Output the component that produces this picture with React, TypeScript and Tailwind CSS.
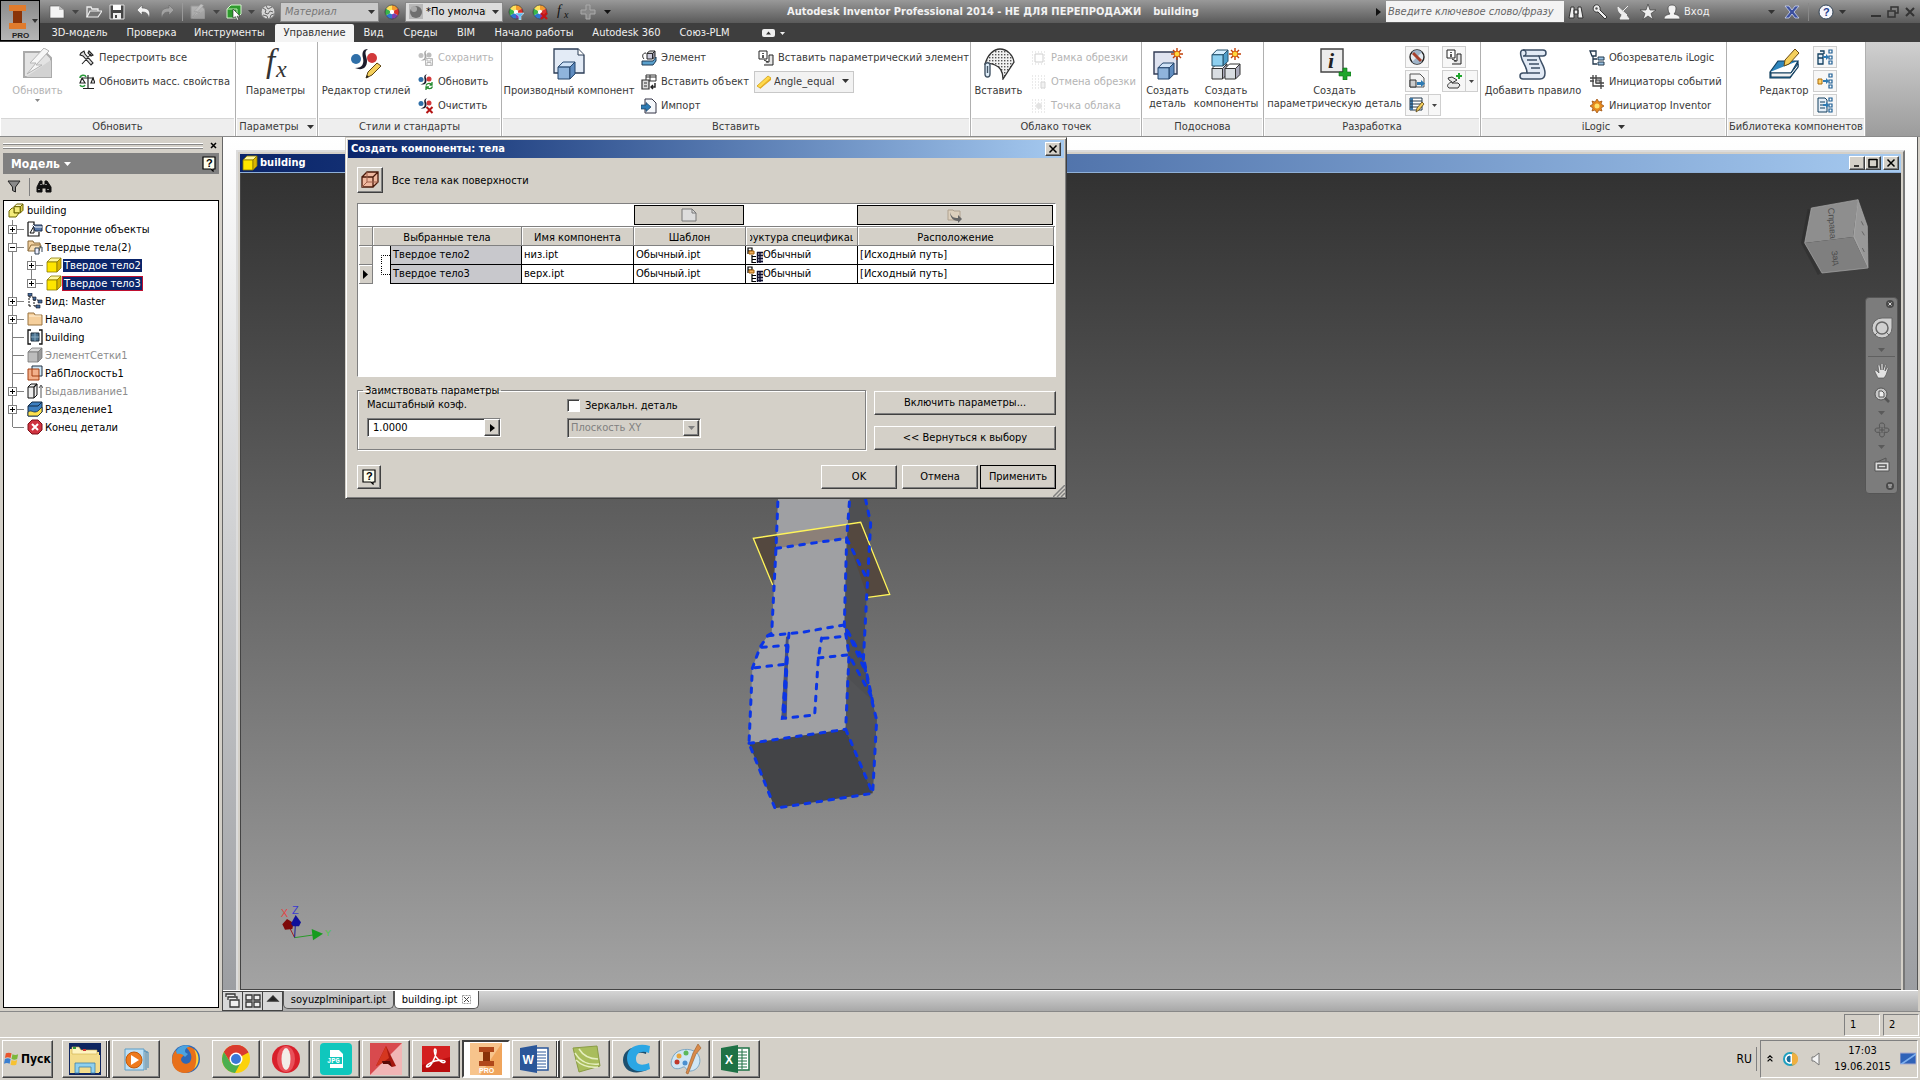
import React from "react";
import type { ReactNode } from "react";

const raised =
  "bg-[#d4d0c8] border border-t-white border-l-white border-r-[#404040] border-b-[#404040] shadow-[inset_-1px_-1px_0_#808080]";
const sunken = "border border-t-[#808080] border-l-[#808080] border-r-white border-b-white";

function Svg({ s = 16, vb = "0 0 16 16", children }: { s?: number; vb?: string; children: ReactNode }) {
  return (
    <svg width={s} height={s} viewBox={vb} fill="none" className="shrink-0" aria-hidden="true">
      {children}
    </svg>
  );
}

function Down({ c = "#333" }: { c?: string }) {
  return (
    <svg width="7" height="4" viewBox="0 0 7 4" className="shrink-0" aria-hidden="true">
      <path d="M0 0h7L3.5 4z" fill={c} />
    </svg>
  );
}

/* ---------- quick access icons ---------- */
const NewIcon = () => (
  <Svg><path d="M1 2h9l5 4v8H1z" fill="#f4f4f4" stroke="#555" strokeWidth=".6" /><path d="M10 2v4h5z" fill="#bbb" /></Svg>
);
const OpenIcon = () => (
  <Svg><path d="M1 13V3h4l1 2h6v2" stroke="#eee" strokeWidth="1.3" /><path d="M4 7h12l-4 6H1z" fill="#777" stroke="#eee" strokeWidth="1.2" /></Svg>
);
const SaveIcon = () => (
  <Svg><path d="M1 1h14v14H1z" fill="#444" stroke="#ddd" /><path d="M4 1h8v5H4z" fill="#fff" /><path d="M4 9h8v6H4z" fill="#eee" /><path d="M6 11h2v3H6z" fill="#444" /></Svg>
);
const UndoIcon = ({ c = "#f2f2f2" }: { c?: string }) => (
  <Svg><path d="M6 1L1 6l5 5V8c4 0 6 1 7 6 2-6 0-10-7-10z" fill={c} stroke="#555" strokeWidth=".5" /></Svg>
);
const RedoIcon = () => (
  <Svg><path d="M10 1l5 5-5 5V8c-4 0-6 1-7 6-2-6 0-10 7-10z" fill="#a2a2a2" stroke="#666" strokeWidth=".5" /></Svg>
);
const BoltPage = ({ s = 16 }: { s?: number }) => (
  <Svg s={s} vb="0 0 32 32">
    <path d="M2 4h21l6 6v19H2z" fill="#e3e3e3" stroke="#aaa" strokeWidth="2" />
    <path d="M22 0L8 15h6L5 26l15-9h-6L27 3z" fill="#f6f6f6" stroke="#b5b5b5" />
    <path d="M4 29L29 12v17z" fill="#d2d2d2" />
  </Svg>
);
const GreenBox = () => (
  <Svg><path d="M1 5l4-4h10v9l-4 4H1z" fill="#2e9a2e" stroke="#d8f5d0" /><path d="M1 5h10v9" stroke="#bfeab5" /><path d="M7 5l7 7-3 .3L13 16l-2 .2-1.500-3.500L7 14z" fill="#fff" stroke="#222" strokeWidth=".6" /></Svg>
);
const Ball = () => (
  <Svg><circle cx="8" cy="8" r="7" fill="#d5d5d5" stroke="#777" /><path d="M3 4l3 2-1 3 3 1 2-3 3 1M6 2l2 3 4-2M3 11l4 1 1 3M10 14l1-3 3-1" stroke="#666" /></Svg>
);
const Wheel = ({ mark }: { mark?: "x" | "f" }) => (
  <Svg>
    <circle cx="8" cy="8" r="7" fill="#eee" />
    <path d="M8 8V1a7 7 0 016.060 3.500z" fill="#f39a2d" />
    <path d="M8 8l6.060-3.500a7 7 0 010 7z" fill="#d9302c" />
    <path d="M8 8l6.060 3.500A7 7 0 018 15z" fill="#7b3fae" />
    <path d="M8 8v7a7 7 0 01-6.060-3.500z" fill="#2f77d0" />
    <path d="M8 8l-6.060 3.500a7 7 0 010-7z" fill="#39b54a" />
    <path d="M8 8L1.940 4.500A7 7 0 018 1z" fill="#ffe25a" />
    <circle cx="8" cy="8" r="2.200" fill="#fff" />
    <circle cx="8" cy="8" r="7" stroke="#333" strokeWidth=".7" />
    {mark === "f" && <path d="M7 9h9l-3 3.500V16h-2v-3.500z" fill="#5ab9f2" stroke="#fff" strokeWidth=".5" />}
    {mark === "x" && <path d="M9 9l6 6M15 9l-6 6" stroke="#c51414" strokeWidth="2.400" />}
  </Svg>
);
const FxSmall = () => (
  <Svg><text x="1" y="11" fontFamily="Liberation Serif" fontStyle="italic" fontSize="14" fill="#111">f</text><text x="8" y="14" fontFamily="Liberation Serif" fontStyle="italic" fontSize="10" fill="#111">x</text></Svg>
);
const PlusGrey = () => (
  <Svg><path d="M6 1h4v5h5v4h-5v5H6v-5H1V6h5z" fill="#888" stroke="#aaa" /></Svg>
);

/* ---------- ribbon icons ---------- */
const Tools = () => (
  <Svg><path d="M3 14L12 4M10 1l4 4-2 1-3-3zM2 3l3-2 1 3 8 9-2 2-8-9-3-1z" fill="#ddd" stroke="#222" strokeWidth="1.100" /></Svg>
);
const Scale = () => (
  <Svg><path d="M9 1v13M4 14.500h11M3 4h12M1 9l2-5 3 5zM12 9l2-5 2 5z" stroke="#222" strokeWidth="1.200" /><path d="M1 4c0-3 5-4 6-1M6 11c-1 2-4 2-5 0" stroke="#2a9a3a" strokeWidth="1.500" /></Svg>
);
const FxBig = () => (
  <svg width="32" height="32" viewBox="0 0 32 32" className="shrink-0 overflow-visible" aria-hidden="true">
    <text x="6" y="24" fontFamily="Liberation Serif" fontStyle="italic" fontSize="33" fill="#333">f</text>
    <text x="16" y="29" fontFamily="Liberation Serif" fontStyle="italic" fontSize="24" fill="#333">x</text>
  </svg>
);
const StyleMark = () => (
  <>
    <circle cx="6" cy="11" r="5" fill="#2f6fa8" />
    <circle cx="22" cy="10" r="5" fill="#d2393b" />
    <path d="M18 1c-6 0-6 5-5 9 1 5 0 10-8 10 7 3 12 0 12-7 0-5-4-9 1-12z" fill="#1c1c2c" />
  </>
);
const StylesBig = () => (
  <Svg s={32} vb="0 0 32 32">
    <StyleMark />
    <path d="M16 30l2-6 9-9 4 3-9 9z" fill="#f4cf5c" stroke="#5b4210" /><path d="M16 30l1-3 2 2z" fill="#222" />
  </Svg>
);
const StyleSmall = ({ k }: { k: "s" | "r" | "x" }) => (
  <Svg vb="0 0 32 32">
    <StyleMark />
    {k === "s" && <path d="M15 17h14v14H15zM18 17v5h8v-5M18 31v-6h8v6" fill="#eee" stroke="#555" strokeWidth="2" />}
    {k === "r" && <path d="M16 23c2-6 10-5 11-2M29 25c-2 6-10 5-12 2M28 16v6h-5M16 32v-6h6" stroke="#258a2f" strokeWidth="2.600" />}
    {k === "x" && <path d="M17 18l12 12M29 18L17 30" stroke="#b41414" strokeWidth="4" />}
  </Svg>
);
const Cube = ({ x, y, w, c1 = "#cfe2f7", c2 = "#8fb4dc", c3 = "#5f8cc0", st = "#23446c" }: { x: number; y: number; w: number; c1?: string; c2?: string; c3?: string; st?: string }) => {
  const d = w * 0.3;
  return (
    <g stroke={st} strokeLinejoin="round">
      <path d={`M${x} ${y + d}l${d} ${-d}h${w - d}l${-d} ${d}z`} fill={c1} />
      <path d={`M${x} ${y + d}h${w - d}v${w - d}h${-(w - d)}z`} fill={c2} />
      <path d={`M${x + w - d} ${y + d}l${d} ${-d}v${w - d}l${-d} ${d}z`} fill={c3} />
    </g>
  );
};
const Sun = ({ x, y, r = 4 }: { x: number; y: number; r?: number }) => (
  <g>
    <path d={`M${x} ${y - r * 1.5}V${y + r * 1.5}M${x - r * 1.5} ${y}H${x + r * 1.5}M${x - r} ${y - r}L${x + r} ${y + r}M${x + r} ${y - r}L${x - r} ${y + r}`} stroke="#c2410c" strokeWidth="1.400" />
    <circle cx={x} cy={y} r={r * 0.7} fill="#ffd83d" stroke="#d9620e" />
  </g>
);
const Derived = () => (
  <Svg s={32} vb="0 0 32 32"><path d="M1 1h24l6 6v18H1z" fill="#e3ebf6" stroke="#2b3c55" strokeWidth="1.300" /><path d="M25 1v6h6" fill="#fff" stroke="#2b3c55" /><Cube x={5} y={14} w={17} /></Svg>
);
const Element = () => (
  <Svg><path d="M1 11h11l3-4v4l-3 4H1z" fill="#5aa0cc" stroke="#1e3b55" /><Cube x={6} y={1} w={8} c1="#eee" c2="#ccd" c3="#99a" st="#222" /><path d="M5 3C1 3 1 7 3 9" stroke="#222" /></Svg>
);
const InsObj = () => (
  <Svg><path d="M5 1h10v6H5zM5 3h10M9 1v6" fill="#fff" stroke="#333" /><path d="M1 6h7v9H1zM3 9h3M3 12h3" fill="#ddd" stroke="#333" strokeWidth="1.200" /><path d="M14 9v4h-4M12 11l-2 2 2 2" stroke="#222" strokeWidth="1.400" /></Svg>
);
const Import = () => (
  <Svg><path d="M4 1h7l4 4v10H4z" fill="#f4f7fb" stroke="#334" /><path d="M0 7h5V4.500L10 9l-5 4.500V11H0z" fill="#2e7bb4" stroke="#173d5e" strokeWidth=".7" /></Svg>
);
const IPart = () => (
  <Svg><path d="M1 1h8v8H1z" fill="#fff" stroke="#222" /><path d="M5 3v1M5 5v3" stroke="#222" strokeWidth="1.500" /><path d="M8 12h3V5h4v10H6" fill="#e6e6e6" stroke="#222" /><path d="M6 10l4 2" stroke="#222" /></Svg>
);
const Ruler = () => (
  <Svg><path d="M1 12L12 2l3 2L4 14z" fill="#ffd84a" stroke="#d0a012" strokeWidth=".8" /><path d="M4 14l11-10v2L4 15z" fill="#e6a91b" /></Svg>
);
const Cloud = () => (
  <Svg s={32} vb="0 0 32 32">
    <defs><pattern id="dots" width="3" height="3" patternUnits="userSpaceOnUse"><rect width="3" height="3" fill="#f2f2f2" /><rect width="1.400" height="1.400" fill="#555" /></pattern></defs>
    <path d="M2 16C5 6 11 1 17 1c7 0 13 6 14 13L20 31c0-8-3-12-8-14-4-2-7-2-10-1z" fill="url(#dots)" stroke="#333" strokeWidth="1.300" />
    <path d="M2 17c0-3 5-3 5 0v9c0 4-5 4-5 0zM4.500 18v7" stroke="#456" strokeWidth="1.400" fill="#dfeefa" />
  </Svg>
);
const DotIcon = ({ k }: { k: number }) => (
  <Svg>
    <path d="M1 2h14M1 5h14M1 8h14M1 11h14M1 14h14" stroke="#999" strokeDasharray="1 2" />
    {k === 0 && <path d="M4 4h8v8H4z" fill="#fff" stroke="#888" />}
    {k === 1 && <path d="M10 8h4v6h-4z" fill="#ddd" stroke="#999" />}
    {k === 2 && <circle cx="8" cy="8" r="3" fill="#bbb" />}
  </Svg>
);
const MakePart = () => (
  <Svg s={32} vb="0 0 32 32"><path d="M2 4h23v22H2z" fill="#dfe3f0" stroke="#333c55" strokeWidth="1.400" /><Cube x={6} y={15} w={16} /><Sun x={25} y={6} /></Svg>
);
const MakeComp = () => (
  <Svg s={32} vb="0 0 32 32"><Cube x={2} y={16} w={15} c1="#fff" c2="#d9dde2" c3="#aab" st="#333" /><Cube x={15} y={16} w={15} c1="#fff" c2="#d9dde2" c3="#aab" st="#333" /><Cube x={2} y={2} w={16} c1="#d6efff" c2="#8ed0f0" c3="#4f9fcb" st="#23506c" /><Sun x={25} y={6} /></Svg>
);
const IBig = () => (
  <Svg s={32} vb="0 0 32 32">
    <path d="M2 1h22v23H2z" fill="#ececec" stroke="#444" strokeWidth="1.400" />
    <text x="9" y="20" fontFamily="Liberation Serif" fontStyle="italic" fontWeight="bold" fontSize="22" fill="#222">i</text>
    <path d="M24 20h4v4h4v4h-4v4h-4v-4h-4v-4h4z" fill="#1fa52c" stroke="#0d6b18" strokeWidth=".6" />
  </Svg>
);
const Scroll = ({ s = 32 }: { s?: number }) => (
  <Svg s={s} vb="0 0 32 32">
    <path d="M6 2h20c4 0 4 6 0 6h-4c1 6 6 10 6 17 0 4-2 6-5 6H6c-4 0-4-6 0-6h4C10 18 5 15 4 8 3 4 4 2 6 2z" fill="#e2eaf5" stroke="#3c4f66" strokeWidth="1.500" />
    <path d="M6 2c4 0 4 6 0 6h16M10 25h13M10 12h10M12 16h10M14 20h9" stroke="#3c4f66" strokeWidth="1.300" />
  </Svg>
);
const TreeIc = () => (
  <Svg><path d="M1 1h6v5H3zM4 6v8h4M4 9h4" stroke="#23384d" strokeWidth="1.300" /><path d="M9 7h6v3H9zM9 12h6v3H9z" fill="#9cc4e4" stroke="#23384d" /></Svg>
);
const Events = () => (
  <Svg><path d="M4 1v11h11M1 4h11v11M7 1v8h8M1 7h4" stroke="#444" strokeWidth="1.300" /><path d="M7 6h4v3H7z" fill="#bbb" stroke="#444" /></Svg>
);
const Trigger = () => (
  <Svg><path d="M8 1l2 3 3-1-1 3 3 2-3 2 1 3-3-1-2 3-2-3-3 1 1-3-3-2 3-2-1-3 3 1z" fill="#e68a1d" stroke="#9a4b0a" strokeWidth=".7" /><circle cx="8" cy="8" r="2.500" fill="#ffe16b" /></Svg>
);
const Book = () => (
  <Svg s={32} vb="0 0 32 32"><path d="M2 24L10 13h20l-7 12H3zM2 24v6h20l8-11v-6" fill="#2f86bd" stroke="#123f5f" strokeWidth="1.200" /><path d="M3 25h20l7-9v3l-8 10H3z" fill="#f2f2f2" stroke="#123f5f" /><path d="M16 18l1-6L27 1l4 4-10 11z" fill="#f4cf5c" stroke="#6b4a10" /></Svg>
);
const NoEntry = () => (
  <Svg><circle cx="8" cy="8" r="7" fill="#e4eaf0" stroke="#222" strokeWidth="1.400" /><path d="M8 8L3 3a7 7 0 0110 0zM8 8l5 5a7 7 0 01-10 0z" fill="#9fb4c9" /><path d="M4 4l8 8" stroke="#a5402c" strokeWidth="3" /></Svg>
);
const Export = () => (
  <Svg><path d="M1 1h10l4 4v9H1z" fill="#f3f3f3" stroke="#555" /><path d="M1 7h6v7H1z" fill="#ccc" stroke="#333" /><path d="M8 9h4V7l4 3.500L12 14v-2H8z" fill="#2e7bb4" /></Svg>
);
const TableEdit = () => (
  <Svg><path d="M1 1h12v12H1z" fill="#fff" stroke="#23384d" /><path d="M1 1h3v12H1z" fill="#3d78a8" /><path d="M1 4h12M1 7h12M1 10h12" stroke="#23384d" /><path d="M7 15l1-4 5-6 2 2-5 6z" fill="#f4cf5c" stroke="#5b4210" strokeWidth=".8" /></Svg>
);
const Feature = () => (
  <Svg><path d="M2 5l4-1 5 3-5 3h6l2 2-2 3H3c-3-2-1-5 3-6L3 7z" fill="#e8e8e8" stroke="#333" /><path d="M13 0v6M10 3h6" stroke="#1fa52c" strokeWidth="2" /></Svg>
);
const Lib = ({ k }: { k: number }) => (
  <Svg>
    {k === 0 && <path d="M1 5h5v10H1zM1 9h5M3 2h4v3" fill="#e4eef8" stroke="#123f5f" strokeWidth="1.300" />}
    {k === 1 && <path d="M1 6h4v5H1z" fill="#ffd36b" stroke="#a96b0a" />}
    {k === 2 && <path d="M1 1h7l2 2v12H1zM3 5h5M3 8h5M3 11h5" fill="#e4eef8" stroke="#123f5f" />}
    <path d="M6 7h3V5l3 3-3 3V9H6z" fill="#2e7bb4" />
    <path d="M12 1h3v3h-3zM12 7h3v3h-3zM12 12h3v3h-3z" fill="#fff" stroke="#1e5e93" strokeWidth="1.200" />
  </Svg>
);

/* ---------- ribbon building blocks ---------- */
function Large({ icon, lines, w, off, drop }: { icon: ReactNode; lines: string[]; w: string; off?: boolean; drop?: boolean }) {
  return (
    <button className={`${w} flex shrink-0 flex-col items-center pt-[2px] ${off ? "text-[#b4b4b4]" : ""}`}>
      {icon}
      <span className="mt-1 flex flex-col whitespace-nowrap text-center leading-[13px]">
        {lines.map((l) => (
          <span key={l}>{l}</span>
        ))}
      </span>
      {drop && <span className="mt-[2px]"><svg width="5" height="3" viewBox="0 0 5 3" aria-hidden="true"><path d="M0 0h5L2.500 3z" fill="#888" /></svg></span>}
    </button>
  );
}

function Small({ icon, label, off }: { icon: ReactNode; label: string; off?: boolean }) {
  return (
    <button className={`flex h-6 items-center gap-1 whitespace-nowrap ${off ? "text-[#b4b4b4]" : ""}`}>
      <span className={off ? "opacity-40 grayscale" : ""}>{icon}</span>
      {label}
    </button>
  );
}

function Mini({ icon, label, drop }: { icon: ReactNode; label: string; drop?: boolean }) {
  return (
    <div className="flex h-[22px]">
      <button aria-label={label} className="flex w-6 items-center justify-center border border-[#cfcfcf] bg-[#f7f7f7]">{icon}</button>
      {drop && (
        <button aria-label={`${label} — меню`} className="flex w-3 items-center justify-center border border-l-0 border-[#cfcfcf] bg-[#f7f7f7]">
          <svg width="5" height="3" viewBox="0 0 5 3" aria-hidden="true"><path d="M0 0h5L2.500 3z" fill="#444" /></svg>
        </button>
      )}
    </div>
  );
}

function Panel({ title, w, drop, children }: { title: string; w: string; drop?: boolean; children: ReactNode }) {
  return (
    <section className={`${w} flex shrink-0 flex-col border-r border-[#b0b0b0] bg-white`}>
      <div className="flex h-[76px] pt-1">{children}</div>
      <h2 className="mx-px flex h-[18px] items-center justify-center gap-2 whitespace-nowrap border-t border-[#d6d6d6] bg-[#eeeeee] pb-[2px] font-normal">
        {title}
        {drop && <Down />}
      </h2>
    </section>
  );
}

function Header() {
  const tabs: [string, string][] = [
    ["3D-модель", "w-[79px]"],
    ["Проверка", "w-[65px]"],
    ["Инструменты", "w-[91px]"],
    ["Управление", "w-[79px]"],
    ["Вид", "w-[39px]"],
    ["Среды", "w-[55px]"],
    ["BIM", "w-[36px]"],
    ["Начало работы", "w-[100px]"],
    ["Autodesk 360", "w-[85px]"],
    ["Союз-PLM", "w-[71px]"],
  ];
  return (
    <header className="flex h-[42px] bg-[#3e3e3e]">
      <button aria-label="Меню приложения" className="flex h-[41px] w-[40px] shrink-0 items-center border border-black bg-linear-to-b from-[#8b8b8b] to-[#b5b5b5]">
        <svg width="38" height="39" viewBox="0 0 38 39" aria-hidden="true">
          <path d="M8 4h17v6h-4v12h4v6H8v-6h4V10H8z" fill="#b5501a" />
          <path d="M8 4h17v6H8zM8 22h17v6H8z" fill="#e07b2c" />
          <path d="M12 10h9v12h-9z" fill="#8a3408" />
          <text x="11" y="37" fontSize="8" fontWeight="bold" fontFamily="Liberation Sans" fill="#222">PRO</text>
          <path d="M31 18h6l-3 4z" fill="#333" />
        </svg>
      </button>
      <div className="flex min-w-0 flex-1 flex-col">
        <div className="flex h-[23px] items-center bg-linear-to-b from-[#999] to-[#5a5a5a]">
          <div className="flex h-full w-[620px] shrink-0 items-center pl-[9px]">
            <div className="flex items-center gap-[7px]">
              <button aria-label="Создать"><NewIcon /></button>
              <Down c="#444" />
              <button aria-label="Открыть"><OpenIcon /></button>
              <button aria-label="Сохранить"><SaveIcon /></button>
              <button aria-label="Отменить" className="ml-1"><UndoIcon /></button>
              <button aria-label="Повторить"><RedoIcon /></button>
              <span className="h-[18px] w-px bg-[#999]" />
              <button aria-label="Обновить" className="opacity-50"><BoltPage /></button>
              <Down c="#444" />
            </div>
            <span className="ml-[6px] flex w-[50px] items-center justify-between"><GreenBox /><Down c="#444" /><Ball /></span>
            <div className="relative ml-[4px] h-[20px] w-[99px]">
              <select aria-label="Материал" className="h-full w-full appearance-none border border-[#888] bg-[#c9c9c9] px-1 text-[11px] italic text-[#777]"><option>Материал</option></select>
              <span className="pointer-events-none absolute right-1 top-2"><Down /></span>
            </div>
            <span className="ml-[5px]"><Wheel /></span>
            <div className="relative ml-[5px] h-[20px] w-[98px]">
              <select aria-label="Внешний вид" className="h-full w-full appearance-none border border-[#888] bg-[#dcdcdc] pl-[20px] pr-4 text-[11px] text-black"><option>*По умолчанию</option></select>
              <span className="pointer-events-none absolute left-1 top-[2px]"><Svg><path d="M0 0h14v15H0z" fill="#b8b8b8" /><circle cx="7" cy="8" r="6" fill="#6f6f6f" /><circle cx="5" cy="5" r="3" fill="#aaa" /></Svg></span>
              <span className="pointer-events-none absolute right-1 top-2"><Down /></span>
            </div>
            <div className="ml-[5px] flex items-center gap-[8px]">
              <button aria-label="Настройка"><Wheel mark="f" /></button>
              <button aria-label="Очистить"><Wheel mark="x" /></button>
              <FxSmall />
              <PlusGrey />
              <Down c="#111" />
            </div>
          </div>
          <h1 className="flex flex-1 gap-3 whitespace-nowrap pl-[127px] text-[11px] font-bold text-[#f2f2f2]">
            <span>Autodesk Inventor Professional 2014 - НЕ ДЛЯ ПЕРЕПРОДАЖИ</span>
            <span>building</span>
          </h1>
          <div className="flex h-full w-[544px] shrink-0 items-center">
            <svg width="5" height="8" viewBox="0 0 5 8" aria-hidden="true"><path d="M0 0v8l5-4z" fill="#111" /></svg>
            <input aria-label="Поиск" placeholder="Введите ключевое слово/фразу" className="ml-[5px] h-[21px] w-[178px] bg-[#f3f3f3] pl-[2px] text-[11px] italic text-[#555] placeholder:text-[#666]" />
            <span className="ml-[4px] flex items-center gap-[8px]">
              <Svg><path d="M1 14l2-11h3v11zM10 14V3h3l2 11zM6 6h4v4H6z" fill="#eee" stroke="#333" /></Svg>
              <Svg><path d="M2 2c3-3 7 0 6 4l7 7-2 2-7-7C2 9 0 5 2 2z" fill="#eee" stroke="#333" /><circle cx="4.500" cy="4.500" r="1.200" fill="#555" /></Svg>
              <Svg><path d="M2 3c0 6 4 9 9 8zM7 7l5-5M4 15h9l-3-4H6z" fill="#eee" stroke="#eee" /></Svg>
              <Svg><path d="M8 0l2 6h6l-5 3.500 2 6L8 12l-5 3.500 2-6L0 6h6z" fill="#eee" stroke="#444" strokeWidth=".7" /></Svg>
              <Svg><path d="M4 4c0-4 8-4 8 0 0 3-1 5-2 6 4 1 6 2 6 5H0c0-3 2-4 6-5-1-1-2-3-2-6z" fill="#f2f2f2" stroke="#444" strokeWidth=".7" /></Svg>
            </span>
            <button className="w-[88px] pl-[4px] text-left text-[#f2f2f2]">Вход</button>
            <Down c="#333" />
            <span className="ml-[9px]"><Svg><path d="M1 2h4l3 4 3-4h4l-5 6 5 6h-4l-3-4-3 4H1l5-6z" fill="#3b4f9e" stroke="#cdd5f2" strokeWidth=".8" /></Svg></span>
            <span className="ml-[8px] h-[18px] w-px bg-[#888]" />
            <button aria-label="Справка" className="ml-[9px]">
              <Svg><circle cx="8" cy="8" r="7" fill="#f5f5fb" stroke="#345" /><text x="5" y="12" fontSize="11" fontWeight="bold" fontFamily="Liberation Sans" fill="#24408e">?</text></Svg>
            </button>
            <span className="ml-[5px]"><Down c="#333" /></span>
            <span className="ml-[24px] flex items-center gap-[5px]">
              <Svg s={12} vb="0 0 12 12"><path d="M1 9h10v2H1z" fill="#333" /></Svg>
              <Svg s={12} vb="0 0 12 12"><path d="M4 4V1h7v6H8M1 5h7v6H1z" stroke="#333" strokeWidth="1.500" /></Svg>
              <Svg s={12} vb="0 0 12 12"><path d="M2 2l8 8M10 2l-8 8" stroke="#333" strokeWidth="2" /></Svg>
            </span>
          </div>
        </div>
        <nav className="flex h-[19px] items-end text-[#f0f0f0]">
          {tabs.map(([t, w]) => (
            <button key={t} className={`${w} h-[18px] whitespace-nowrap text-center ${t === "Управление" ? "rounded-t-[2px] bg-[#f4f4f4] text-[#333]" : ""}`}>{t}</button>
          ))}
          <button aria-label="Свернуть ленту" className="ml-[22px] flex h-[18px] items-center gap-[5px]">
            <svg width="13" height="8" viewBox="0 0 13 8" aria-hidden="true"><rect width="13" height="8" rx="2" fill="#eee" /><path d="M4 5.500h5L6.500 2.500z" fill="#333" /></svg>
            <svg width="5" height="3" viewBox="0 0 5 3" aria-hidden="true"><path d="M0 0h5L2.500 3z" fill="#eee" /></svg>
          </button>
        </nav>
      </div>
    </header>
  );
}

function Ribbon() {
  return (
    <div className="flex border-b border-[#8a8a8a] bg-linear-to-b from-[#d0d0d0] to-[#9c9c9c] text-[#3a3a3a]">
      <Panel title="Обновить" w="w-[236px]">
        <div className="w-[79px]"><Large w="w-[75px]" icon={<BoltPage s={32} />} lines={["Обновить"]} off drop /></div>
        <div><Small icon={<Tools />} label="Перестроить все" /><Small icon={<Scale />} label="Обновить масс. свойства" /></div>
      </Panel>
      <Panel title="Параметры" w="w-[82px]" drop>
        <Large w="w-[79px]" icon={<FxBig />} lines={["Параметры"]} />
      </Panel>
      <Panel title="Стили и стандарты" w="w-[184px]">
        <Large w="w-[96px]" icon={<StylesBig />} lines={["Редактор стилей"]} />
        <div className="pl-1">
          <Small icon={<StyleSmall k="s" />} label="Сохранить" off />
          <Small icon={<StyleSmall k="r" />} label="Обновить" />
          <Small icon={<StyleSmall k="x" />} label="Очистить" />
        </div>
      </Panel>
      <Panel title="Вставить" w="w-[469px]">
        <Large w="w-[134px]" icon={<Derived />} lines={["Производный компонент"]} />
        <div className="w-[118px] pl-[5px]">
          <Small icon={<Element />} label="Элемент" />
          <Small icon={<InsObj />} label="Вставить объект" />
          <Small icon={<Import />} label="Импорт" />
        </div>
        <div className="pl-1">
          <Small icon={<IPart />} label="Вставить параметрический элемент" />
          <div className="relative -ml-1 mt-px h-[22px] w-[100px]">
            <select aria-label="iMate" className="h-full w-full appearance-none border border-[#c8c8c8] bg-[#f2f2f2] pl-[19px] pr-4 text-[11px]"><option>Angle_equal</option></select>
            <span className="pointer-events-none absolute left-[2px] top-[3px]"><Ruler /></span>
            <span className="pointer-events-none absolute right-[5px] top-[8px]"><Down /></span>
          </div>
        </div>
      </Panel>
      <Panel title="Облако точек" w="w-[171px]">
        <Large w="w-[55px]" icon={<Cloud />} lines={["Вставить"]} />
        <div className="pl-[5px]">
          <Small icon={<DotIcon k={0} />} label="Рамка обрезки" off />
          <Small icon={<DotIcon k={1} />} label="Отмена обрезки" off />
          <Small icon={<DotIcon k={2} />} label="Точка облака" off />
        </div>
      </Panel>
      <Panel title="Подоснова" w="w-[122px]">
        <Large w="w-[51px]" icon={<MakePart />} lines={["Создать", "деталь"]} />
        <Large w="w-[66px]" icon={<MakeComp />} lines={["Создать", "компоненты"]} />
      </Panel>
      <Panel title="Разработка" w="w-[217px]">
        <Large w="w-[141px]" icon={<IBig />} lines={["Создать", "параметрическую деталь"]} />
        <div className="flex w-[37px] flex-col gap-[2px]">
          <Mini icon={<NoEntry />} label="Эффективность" />
          <Mini icon={<Export />} label="Экспорт" />
          <Mini icon={<TableEdit />} label="Таблица" drop />
        </div>
        <div className="flex flex-col gap-[2px]">
          <Mini icon={<IPart />} label="Параметрический элемент" />
          <Mini icon={<Feature />} label="Фрагмент" drop />
        </div>
      </Panel>
      <Panel title="iLogic" w="w-[246px]" drop>
        <Large w="w-[104px]" icon={<Scroll />} lines={["Добавить правило"]} />
        <div className="pl-1">
          <Small icon={<TreeIc />} label="Обозреватель iLogic" />
          <Small icon={<Events />} label="Инициаторы событий" />
          <Small icon={<Trigger />} label="Инициатор Inventor" />
        </div>
      </Panel>
      <Panel title="Библиотека компонентов" w="w-[139px]">
        <div className="pl-[28px]"><Large w="w-[58px]" icon={<Book />} lines={["Редактор"]} /></div>
        <div className="flex flex-col gap-[2px]">
          <Mini icon={<Lib k={0} />} label="Опубликовать деталь" />
          <Mini icon={<Lib k={1} />} label="Опубликовать элемент" />
          <Mini icon={<Lib k={2} />} label="Карта категорий" />
        </div>
      </Panel>
      <div className="flex-1" />
    </div>
  );
}

/* ---------- model browser ---------- */
const YCube = ({ g }: { g?: boolean }) => (
  <Svg>
    <path d="M1 5l4-4h10l-4 4z" fill={g ? "#d8d8d8" : "#fff7a0"} stroke={g ? "#777" : "#8a7a00"} strokeWidth=".8" />
    <path d="M1 5h10v10H1z" fill={g ? "#bdbdbd" : "#ffe600"} stroke={g ? "#777" : "#8a7a00"} strokeWidth=".8" />
    <path d="M11 5l4-4v10l-4 4z" fill={g ? "#999" : "#d9b400"} stroke={g ? "#777" : "#8a7a00"} strokeWidth=".8" />
  </Svg>
);
const rootIcon = (
  <Svg><Cube x={6} y={1} w={9} c1="#fffbd0" c2="#f4ec7c" c3="#d8cc50" st="#6b6400" /><path d="M1 8l3-3h2v5h5l-3 4H1z" fill="#f4ec7c" stroke="#6b6400" /></Svg>
);
const thirdIcon = (
  <Svg><path d="M1 1h6v3M1 1v14h11v-4" stroke="#111" strokeWidth="1.200" /><path d="M3 12l4-7v7z" fill="#fff" stroke="#111" /><path d="M6 4h9v6H8z" fill="#5878a8" stroke="#1c2c48" /><path d="M6 4l2 2h7" stroke="#fff" /></Svg>
);
const foldIcon = (
  <Svg><path d="M1 12V2h5l1 2h6v2" fill="#f3d1a0" stroke="#8a6a3a" /><path d="M1 12l3-6h10l-2 6z" fill="#f8ddb4" stroke="#8a6a3a" /><path d="M8 9h4v6H8z" fill="#eef" stroke="#345" /><path d="M12 8h3v5" stroke="#345" /></Svg>
);
const folder = (
  <Svg><path d="M1 14V2h6l1 2h7v10z" fill="#f5cf9c" stroke="#9a7440" /><path d="M2 5h12" stroke="#fff1d8" /></Svg>
);
const viewIcon = (
  <Svg><path d="M2 2v11M2 4h4M7 6v7M7 7h4M2 13h3M7 13h3" stroke="#111" strokeDasharray="2 1" /><path d="M1 0h4v3H1zM6 4h3v3H6zM11 7h4v3h-4zM9 12h4v3H9z" fill="#456b99" stroke="#112" strokeWidth=".6" /></Svg>
);
const brIcon = (
  <Svg><path d="M4 1H1v14h3M12 1h3v14h-3" stroke="#111" strokeWidth="1.300" /><path d="M4 4h8v8H4z" fill="#4a7390" stroke="#1b2c3a" /><path d="M8 4v8M4 8h8" stroke="#86a9c0" /></Svg>
);
const planeIcon = (
  <Svg><path d="M5 1h10v10H5z" fill="#cfe6f5" stroke="#234" /><path d="M1 4h11v11H1z" fill="#f3b08a" stroke="#a33e10" /><path d="M5 4v7h7" stroke="#a33e10" /></Svg>
);
const extrIcon = (
  <Svg><path d="M1 4l3-3h6v11l-3 3H1z" fill="#eee" stroke="#111" /><path d="M1 4h6v11M7 4l3-3" stroke="#111" strokeWidth="1.200" /><path d="M14 15V3M12 5l2-3 2 3" stroke="#555" /></Svg>
);
const splitIcon = (
  <Svg><path d="M1 5l4-4h10v10l-4 4H1z" fill="#3d7fc0" stroke="#122b45" /><path d="M1 5h10l4-4" stroke="#122b45" /><path d="M1 11c4-3 5 2 10-1l4-4v5l-4 4H1z" fill="#ffe14d" stroke="#122b45" strokeWidth=".8" /></Svg>
);
const endIcon = (
  <Svg><path d="M5 1h6l4 4v6l-4 4H5l-4-4V5z" fill="#cf3340" stroke="#7a1018" /><path d="M5 5l6 6M11 5l-6 6" stroke="#fff" strokeWidth="2" /></Svg>
);

interface Node {
  icon: ReactNode;
  label: string;
  exp?: "+" | "-";
  child?: boolean;
  last?: boolean;
  tone?: "dim" | "sel" | "selred";
}

const nodes: Node[] = [
  { icon: thirdIcon, label: "Сторонние объекты", exp: "+" },
  { icon: foldIcon, label: "Твердые тела(2)", exp: "-" },
  { icon: <YCube />, label: "Твердое тело2", exp: "+", child: true, tone: "sel" },
  { icon: <YCube />, label: "Твердое тело3", exp: "+", child: true, last: true, tone: "selred" },
  { icon: viewIcon, label: "Вид: Master", exp: "+" },
  { icon: folder, label: "Начало", exp: "+" },
  { icon: brIcon, label: "building" },
  { icon: <YCube g />, label: "ЭлементСетки1", tone: "dim" },
  { icon: planeIcon, label: "РабПлоскость1" },
  { icon: extrIcon, label: "Выдавливание1", exp: "+", tone: "dim" },
  { icon: splitIcon, label: "Разделение1", exp: "+" },
  { icon: endIcon, label: "Конец детали", last: true },
];

function Branch({ exp, last }: { exp?: "+" | "-"; last?: boolean }) {
  return (
    <svg width="19" height="18" viewBox="0 0 19 18" className="shrink-0" aria-hidden="true" shapeRendering="crispEdges">
      <path d={`M4.500 0V${last ? 9 : 18}M4.500 9.500H16`} stroke="#808080" />
      {exp && <path d="M.5 5.500h8v8h-8z" fill="#fff" stroke="#808080" />}
      {exp && <path d="M2 9.500h5" stroke="#000" />}
      {exp === "+" && <path d="M4.500 7v5" stroke="#000" />}
    </svg>
  );
}

const HelpGlyph = () => (
  <Svg><path d="M2 1h12v12h-2v2l-2-2H2z" fill="#fffff0" stroke="#000" strokeWidth="1.200" /><text x="5" y="11" fontSize="11" fontWeight="bold" fontFamily="Liberation Sans" fill="#000">?</text></Svg>
);

function Browser() {
  return (
    <aside className="flex w-[222px] shrink-0 flex-col px-[3px] pb-[3px]">
      <div className="flex h-4 items-center gap-[7px] pt-px">
        <span className="flex h-[6px] flex-1 flex-col justify-between"><span className="h-[2px] border-b border-[#888] bg-white" /><span className="h-[2px] border-b border-[#888] bg-white" /></span>
        <button aria-label="Закрыть панель" className="mr-[2px]"><Svg s={7} vb="0 0 7 7"><path d="M1 1l5 5M6 1L1 6" stroke="#000" strokeWidth="1.500" /></Svg></button>
      </div>
      <div className="flex h-[21px] items-center bg-[#808080] pl-2 pr-[2px] text-[12px] font-bold text-white">
        Модель
        <span className="ml-1 flex-1"><Down c="#fff" /></span>
        <button aria-label="Справка"><HelpGlyph /></button>
      </div>
      <div className="flex h-[26px] items-center gap-[6px] pl-1 text-black">
        <button aria-label="Фильтр"><Svg><path d="M1 2h12L8.500 8v5l-3-1.500V8z" fill="#8a8a8a" stroke="#222" /></Svg></button>
        <span className="h-[18px] w-px bg-[#808080]" />
        <button aria-label="Найти"><Svg><path d="M1 13V8l3-6h2v4h3V2h2l4 6v5h-5v-4H6v4z" fill="#111" stroke="#111" /><path d="M3 10v1M12 10v1M5 5v1M10 5v1" stroke="#fff" /></Svg></button>
      </div>
      <ul className="flex-1 border border-black bg-white pl-[4px] pt-px text-black">
        <li className="flex h-[18px] items-center gap-[3px]">{rootIcon}building</li>
        {nodes.map((n) => (
          <li key={n.label + (n.exp ?? "")} className="flex h-[18px] items-center">
            {n.child && (
              <svg width="19" height="18" viewBox="0 0 19 18" className="shrink-0" aria-hidden="true" shapeRendering="crispEdges"><path d="M4.500 0V18" stroke="#808080" /></svg>
            )}
            <Branch exp={n.exp} last={n.last} />
            <span className="flex items-center gap-px">
              {n.icon}
              <span
                className={`whitespace-nowrap px-px leading-[13px] ${n.tone === "dim" ? "text-[#8c8c8c]" : ""} ${n.tone === "sel" ? "bg-[#0a246a] text-white" : ""} ${n.tone === "selred" ? "bg-[#0a246a] text-white outline outline-[#c01030]" : ""}`}
              >
                {n.label}
              </span>
            </span>
          </li>
        ))}
      </ul>
    </aside>
  );
}

/* ---------- 3D viewport ---------- */
function Tower() {
  return (
    <svg width="220" height="340" viewBox="0 0 660 1020" fill="none" className="absolute left-[459px] top-[317px]" aria-hidden="true">
      <path d="M450 0l45 10 17 90-12 220-10 190 25 120 15 60-12 220-81-192 8-223-14-90 8-260z" fill="#4e4f52" />
      <path d="M235 0h216l-11 145-7 260 10 90-6 223-290 42 10-225 23-63 23-35 12-7 13-255z" fill="#9fa0a3" />
      <path d="M147 760l290-42 81 192-293 45z" fill="#434447" />
      <path d="M440 560l75 70 15 60-12 220-81-192z" fill="#525356" />
      <path d="M160 145l73-11-5 41-10 110z" fill="#54483f" />
      <path d="M233 134l212-33-5 44-212 30z" fill="#8c8078" />
      <path d="M445 101l37-4 87 216-66 9-60-175z" fill="#54483f" />
      <path d="M218 285L160 145 482 97l87 216-66 9" stroke="#fff45a" strokeWidth="4" />
      <path d="M258 440l-14 245 16 4 6-250z" fill="#4c5272" />
      <g stroke="#0b35e6" strokeWidth="9" strokeDasharray="14 22" strokeLinecap="round">
        <path d="M235 0l-7 175-13 255-12 7-23 35v0l-23 63-10 225 78 195 293-45 12-220-15-60-25-120 10-190 12-220-17-80" />
        <path d="M451 0l-11 145-7 260 14 90-10 223 81 192" />
        <path d="M228 175l212-30 60 120" />
        <path d="M205 437l100-10 128-22 60 110 25 120" />
        <path d="M185 472l75-6M165 533l90-10M370 445l63-6M355 504l92-10" />
        <path d="M267 430l-8 90-12 165 97-10 11-171 10-60" />
        <path d="M262 470l-10 210" strokeWidth="12" />
        <path d="M147 760l290-42" />
        <path d="M440 420l50 110M455 510l60 110" />
      </g>
    </svg>
  );
}

function ViewCube() {
  return (
    <svg width="76" height="84" viewBox="0 0 228 252" className="absolute right-[27px] top-[25px]" aria-hidden="true">
      <path d="M34 34l-20 100 50 95" stroke="#222" strokeWidth="10" opacity=".35" fill="none" />
      <path d="M40 30L180 5l-15 112L20 135z" fill="#8e8e8e" />
      <path d="M20 135l145-18 45 93-138 15z" fill="#7f7f7f" />
      <path d="M180 5l28 80 2 125-45-93z" fill="#989898" />
      <path d="M40 30L180 5l28 80 2 125-138 15-52-90zM180 5l-12 110 42 93" stroke="#aaa" strokeWidth="2" fill="none" />
      <text x="90" y="30" transform="rotate(86 90 30)" fontSize="27" fontFamily="Liberation Sans" fill="#4c4c4c">Справа</text>
      <text x="100" y="160" transform="rotate(78 100 160)" fontSize="25" fontFamily="Liberation Sans" fill="#4a4a4a">Зад</text>
      <path d="M190 70l6 12M192 100l7 12M193 150l6 12" stroke="#666" strokeWidth="3" />
    </svg>
  );
}

function NavBar() {
  return (
    <div className="absolute right-[3px] top-[124px] flex h-[197px] w-[33px] flex-col items-center rounded-[4px] border border-[#555] bg-[#7c7c7c] text-[#ddd]">
      <button aria-label="Закрыть навигацию" className="self-end pr-[3px] pt-[2px]"><Svg s={8} vb="0 0 8 8"><circle cx="4" cy="4" r="4" fill="#4a4a4a" /><path d="M2.500 2.500l3 3M5.500 2.500l-3 3" stroke="#ddd" /></Svg></button>
      <button aria-label="Суперштурвал" className="mt-2"><Svg s={24} vb="0 0 24 24"><path d="M12 2h10v10a10 10 0 11-10-10z" fill="#d0d0d0" stroke="#666" /><circle cx="12" cy="12" r="6" stroke="#666" strokeWidth="1.500" /><path d="M5 19l3-3M19 19l-3-3" stroke="#666" /></Svg></button>
      <span className="mt-2"><Down c="#5a5a5a" /></span>
      <span className="mt-1 h-px w-[27px] bg-[#606060]" />
      <button aria-label="Панорамирование" className="mt-[6px]"><Svg><path d="M4 15L1 9c-1-2 1-2 2-1l2 2L4 3c0-2 2-1 2 0l1 4V1c0-1 2-1 2 0v6l2-5c0-1 2-1 1 1l-1 5 2-3c1-1 2 0 1 1l-2 6-2 3z" fill="#e2e2e2" stroke="#555" strokeWidth=".7" /></Svg></button>
      <button aria-label="Зумирование" className="mt-2"><Svg><circle cx="7" cy="7" r="6" fill="#c8c8c8" stroke="#555" /><path d="M5 4h3l2 2v4H5z" fill="#eee" stroke="#555" /><path d="M11 11l4 4" stroke="#555" strokeWidth="2.500" /></Svg></button>
      <span className="mt-2"><Down c="#5a5a5a" /></span>
      <button aria-label="Орбита" className="mt-[7px]"><Svg><path d="M8 1c3 0 3 3 2 5 3 0 5 0 5 2s-2 3-5 2c1 3 0 5-2 5s-3-2-2-5c-3 1-5 0-5-2s2-2 5-2C5 3 5 1 8 1z" stroke="#555" /><path d="M8 5v6M5 8h6" stroke="#555" /></Svg></button>
      <span className="mt-[7px]"><Down c="#5a5a5a" /></span>
      <button aria-label="Вид на" className="mt-2"><Svg><path d="M1 5h14v9H1z" fill="#ddd" stroke="#555" /><path d="M4 8h8v3H4z" stroke="#555" strokeWidth="1.500" /><path d="M3 5l9-4v3" stroke="#555" /></Svg></button>
      <span className="mt-auto self-end pb-[3px] pr-[3px]"><Svg s={8} vb="0 0 8 8"><circle cx="4" cy="4" r="4" fill="#4a4a4a" /><path d="M2 3h4M2.500 5h3" stroke="#ddd" /></Svg></span>
    </div>
  );
}

function WinBtn({ label, d }: { label: string; d: string }) {
  return (
    <button aria-label={label} className={`flex h-[14px] w-4 items-center justify-center ${raised}`}>
      <Svg s={10} vb="0 0 10 10"><path d={d} stroke="#000" strokeWidth="1.500" /></Svg>
    </button>
  );
}

function Workspace() {
  return (
    <main className="flex min-w-0 flex-1 flex-col border-l border-[#666]">
      <div className="flex flex-1 flex-col border-r border-[#555] bg-linear-to-b from-white to-[#9c9ea2] pl-[13px] pr-[12px] pt-[13px]">
        <section className="flex flex-1 flex-col border-2 border-b-0 border-[#dcdcdc] border-r-[#777] bg-[#d4d0c8] px-[2px] pt-[2px]">
          <div className="flex h-[19px] items-center border-b border-[#8fb0d8] bg-linear-to-r from-[#0a246a] to-[#a6caf0] px-[2px] text-white">
            <YCube />
            <h2 className="ml-[2px] flex-1 font-bold">building</h2>
            <WinBtn label="Свернуть" d="M2 8h5" />
            <WinBtn label="Развернуть" d="M1 1.500h8M1 1v8h8V1" />
            <span className="w-[2px]" />
            <WinBtn label="Закрыть" d="M1.500 1.500l7 7M8.500 1.500l-7 7" />
          </div>
          <div className="relative flex-1 overflow-hidden border-b border-l border-[#444] bg-linear-to-b from-[#323232] to-[#a3a3a3]">
            <Tower />
            <ViewCube />
            <NavBar />
            <svg width="60" height="40" viewBox="0 0 180 120" className="absolute bottom-[44px] left-[38px]" aria-hidden="true">
              <path d="M47 98L28 60" stroke="#a02020" strokeWidth="3" /><path d="M10 58l14-16 20 12-4 18-22 2z" fill="#7d0a0a" />
              <path d="M47 98l2-40" stroke="#1a1a90" strokeWidth="3" /><path d="M36 56l14-26 16 22-6 12H42z" fill="#10109a" />
              <path d="M47 98l55-8" stroke="#2a9a2a" strokeWidth="3" /><path d="M98 72l34 14-30 20z" fill="#169c1e" />
              <text x="5" y="36" fontSize="33" fontFamily="Liberation Sans" fill="#e04646">X</text>
              <text x="39" y="28" fontSize="33" fontFamily="Liberation Sans" fill="#3a3ad0">Z</text>
              <text x="138" y="92" fontSize="28" fontFamily="Liberation Sans" fill="#4cc44c">Y</text>
            </svg>
          </div>
        </section>
      </div>
      <div className="flex h-[21px] border-t border-white bg-linear-to-b from-[#d4d4d4] to-[#a8a8a8] text-black">
        {[
          "M1 4V1h9v2M3 7V4h9v2M5 7h9v7H5z",
          "M1 2h6v5H1zM9 2h6v5H9zM1 9h6v5H1zM9 9h6v5H9z",
          "M3 8l5-5 5 5z",
        ].map((d, i) => (
          <button key={d} aria-label={["Каскад", "Плитка", "Список"][i]} className="-ml-px flex h-5 w-[21px] items-center justify-center border border-[#444] bg-[#d8d8d8]">
            <Svg><path d={d} stroke="#333" strokeWidth="1.300" fill={i === 2 ? "#222" : "#eee"} /></Svg>
          </button>
        ))}
        <button className="h-[18px] w-[111px] rounded-b-[5px] border border-t-0 border-[#555] bg-[#c9c9c9] text-center">soyuzplminipart.ipt</button>
        <button className="flex h-[18px] w-[85px] items-center justify-center gap-[5px] rounded-b-[5px] border border-t-0 border-[#555] bg-white">
          building.ipt
          <Svg s={9} vb="0 0 9 9"><path d="M.5.5h8v8h-8z" stroke="#999" strokeDasharray="2 1" /><path d="M2 2l5 5M7 2L2 7" stroke="#444" /></Svg>
        </button>
      </div>
    </main>
  );
}

/* ---------- dialog ---------- */
const BomIcon = () => (
  <Svg>
    <path d="M1 1h4v3H1zM1 4v3" fill="#fff" stroke="#000" strokeWidth="1.200" />
    <path d="M2 4h5v3H2z" fill="#f0b060" stroke="#a05a00" />
    <path d="M5 8v8M5 9.500h4M5 12.500h4M5 15.500h4" stroke="#000" strokeWidth="1.200" />
    <path d="M10 5h6v11h-6z" fill="#ccd" />
    <path d="M10 5.500h6M10 8.500h6M10 11.500h6M10 14.500h6M10.500 5v11M13 5v11" stroke="#101030" strokeWidth="1.400" />
  </Svg>
);

function PushButton({ children, w, strong }: { children: ReactNode; w: string; strong?: boolean }) {
  return (
    <button className={`${w} h-6 whitespace-nowrap text-center ${raised} ${strong ? "outline outline-black -outline-offset-1" : ""}`}>{children}</button>
  );
}

function Dialog() {
  const head = "h-[19px] border-b border-r border-[#808080] bg-[#d4d0c8] p-0 pt-[3px] text-center font-normal shadow-[inset_1px_1px_0_#fff] overflow-hidden whitespace-nowrap";
  const cell = "h-[19px] border-b border-r border-black p-0 pl-[2px] whitespace-nowrap";
  const rows: [string, string][] = [["Твердое тело2", "низ.ipt"], ["Твердое тело3", "верх.ipt"]];
  return (
    <div role="dialog" aria-labelledby="dlg-title" className="absolute left-[345px] top-[137px] w-[722px] border border-[#d4d0c8] border-b-[#404040] border-r-[#404040] bg-[#d4d0c8] p-[2px] text-black shadow-[inset_1px_1px_0_#fff,inset_-1px_-1px_0_#808080]">
      <div className="flex h-[18px] items-center bg-linear-to-r from-[#0a246a] to-[#a6caf0] pl-[3px] pr-[3px] text-white">
        <h2 id="dlg-title" className="flex-1 font-bold">Создать компоненты: тела</h2>
        <WinBtn label="Закрыть окно" d="M1.500 1.500l7 7M8.500 1.500l-7 7" />
      </div>
      <div className="pt-[9px] pr-2 pb-[7px] pl-[9px]">
        <div className="flex items-center gap-[9px]">
          <button aria-label="Все тела как поверхности" className={`flex h-[26px] w-[26px] items-center justify-center ${raised}`}>
            <Svg s={18} vb="0 0 18 18"><path d="M1 6l5-5h11v10l-5 5H1z" fill="#f0b9a0" /><path d="M1 6h11v10H1zM1 6l5-5h11v10l-5 5M12 6l5-5" stroke="#4a1a0a" strokeWidth="1.300" /><path d="M6 1v10h11M6 11l-5 5" stroke="#a0604a" /></Svg>
          </button>
          <span className="pt-[2px]">Все тела как поверхности</span>
        </div>
        <div className={`mt-[10px] h-[174px] bg-white ${sunken}`}>
          <div className="flex h-[23px] border-b border-[#808080] pl-[276px] py-px">
            <button aria-label="Выбрать шаблон" className="flex w-[110px] items-center justify-center border border-black bg-[#d4d0c8]"><Svg><path d="M1 2h10l4 4v8H1z" fill="#ddd" stroke="#777" /><path d="M11 2v4h4" stroke="#777" /></Svg></button>
            <button aria-label="Выбрать расположение" className="ml-[113px] flex w-[196px] items-center justify-center border border-black bg-[#d4d0c8]"><Svg><path d="M1 13V3h5l1 1h6v9z" fill="#ddd0bd" stroke="#b0a290" /><path d="M3 5c1 5 4 6 8 6V8l4 4-4 4v-2C6 14 3 10 3 5z" fill="#666" /></Svg></button>
          </div>
          <table className="ml-px w-[695px] table-fixed border-separate border-spacing-0">
            <colgroup>
              <col className="w-[14px]" /><col className="w-[18px]" /><col className="w-[131px]" /><col className="w-[112px]" /><col className="w-[112px]" /><col className="w-[112px]" /><col />
            </colgroup>
            <thead>
              <tr>
                <td className={head} />
                <th colSpan={2} className={head}>Выбранные тела</th>
                <th className={head}>Имя компонента</th>
                <th className={head}>Шаблон</th>
                <th className={head}><span className="mx-1 flex justify-center overflow-hidden">Структура спецификации</span></th>
                <th className={head}>Расположение</th>
              </tr>
            </thead>
            <tbody>
              {rows.map(([body, name], i) => (
                <tr key={body}>
                  <td className="h-[19px] border-b border-r border-[#808080] bg-[#d4d0c8] p-0 pl-1 shadow-[inset_1px_1px_0_#fff]">
                    {i === 1 && <svg width="5" height="9" viewBox="0 0 5 9" aria-hidden="true"><path d="M0 0v9l5-4.500z" fill="#000" /></svg>}
                  </td>
                  <td className="border-r border-black p-0">
                    <svg width="17" height="19" viewBox="0 0 17 19" className="block" aria-hidden="true"><path d={i === 0 ? "M17 9.500H8.500V19" : "M17 9.500H8.500V0"} stroke="#000" strokeDasharray="1 1" fill="none" /></svg>
                  </td>
                  <td className={`${cell} bg-[#c8c8cc]`}>{body}</td>
                  <td className={cell}>{name}</td>
                  <td className={cell}>Обычный.ipt</td>
                  <td className={cell}><span className="-ml-px flex items-center"><BomIcon />Обычный</span></td>
                  <td className={cell}>[Исходный путь]</td>
                </tr>
              ))}
            </tbody>
          </table>
        </div>
        <div className="mt-[7px] flex gap-2">
          <fieldset className="flex h-[66px] flex-1 border border-[#808080] pl-[9px] shadow-[1px_1px_0_#fff,inset_1px_1px_0_#fff]">
            <legend className="-ml-1 px-[2px] leading-[13px]">Заимствовать параметры</legend>
            <div className="w-[200px] pt-px">
              <label htmlFor="scale" className="block leading-[13px]">Масштабный коэф.</label>
              <div className={`mt-[7px] flex h-[19px] w-[134px] bg-white ${sunken} shadow-[inset_1px_1px_0_#404040]`}>
                <input id="scale" defaultValue="1.0000" className="min-w-0 flex-1 bg-transparent pl-[5px] outline-none" />
                <button aria-label="Варианты значения" className={`flex w-4 items-center justify-center ${raised}`}><svg width="5" height="8" viewBox="0 0 5 8" aria-hidden="true"><path d="M0 0v8l5-4z" fill="#000" /></svg></button>
              </div>
            </div>
            <div className="pt-px">
              <label className="flex h-[15px] items-center gap-[5px]">
                <input type="checkbox" className={`h-[13px] w-[13px] appearance-none bg-white ${sunken} shadow-[inset_1px_1px_0_#404040]`} />
                Зеркальн. деталь
              </label>
              <div className="relative mt-[5px] h-5 w-[134px]">
                <select disabled aria-label="Плоскость зеркала" className={`h-full w-full appearance-none bg-[#d4d0c8] pl-[3px] text-[11px] text-[#808080] opacity-100 ${sunken} shadow-[inset_1px_1px_0_#404040]`}><option>Плоскость XY</option></select>
                <span className={`pointer-events-none absolute right-[2px] top-[2px] flex h-4 w-4 items-center justify-center ${raised}`}><Down c="#808080" /></span>
              </div>
            </div>
          </fieldset>
          <div className="flex flex-col gap-[11px] pt-[7px]">
            <PushButton w="w-[182px]">Включить параметры...</PushButton>
            <PushButton w="w-[182px]">&lt;&lt; Вернуться к выбору</PushButton>
          </div>
        </div>
        <div className="mt-[15px] flex items-center">
          <button aria-label="Справка по команде" className={`mr-auto flex h-6 w-6 items-center justify-center ${raised}`}><HelpGlyph /></button>
          <PushButton w="w-[76px]">OK</PushButton>
          <span className="w-[5px]" />
          <PushButton w="w-[76px]">Отмена</PushButton>
          <span className="w-[2px]" />
          <PushButton w="w-[76px]" strong>Применить</PushButton>
        </div>
      </div>
      <svg width="12" height="12" viewBox="0 0 12 12" className="absolute bottom-px right-px" aria-hidden="true"><path d="M0 12L12 0M4 12l8-8M8 12l4-4" stroke="#808080" strokeWidth="1.500" /></svg>
    </div>
  );
}

/* ---------- task bar ---------- */
function Task({ label, stack, active, plain, children }: { label: string; stack?: boolean; active?: boolean; plain?: boolean; children: ReactNode }) {
  const skin = plain ? "" : active ? "bg-white border-2 border-t-[#404040] border-l-[#404040] border-r-white border-b-white" : raised;
  return (
    <button aria-label={label} className={`flex h-[38px] w-12 items-stretch ${skin}`}>
      <span className="flex flex-1 items-center justify-center">
        <svg width="32" height="32" viewBox="0 0 32 32" aria-hidden="true">{children}</svg>
      </span>
      {stack && <span className="w-[3px] border-x border-[#404040] bg-white" />}
    </button>
  );
}

function TaskBar() {
  return (
    <footer className="flex h-[43px] items-center border-t border-white bg-[#d4d0c8] pl-[2px] pr-[2px] text-black">
      <button className={`flex h-[38px] w-[51px] items-center gap-px pl-px text-[12px] font-bold ${raised}`}>
        <svg width="16" height="16" viewBox="0 0 17 16" className="shrink-0" aria-hidden="true">
          <path d="M2 2c2-1 4-1 6 0L7 7c-2-1-4-1-6 0z" fill="#e8552d" /><path d="M9 3c2 1 4 1 6 0l-1 5c-2 1-4 1-6 0z" fill="#7cb83a" />
          <path d="M1 8c2-1 4-1 6 0l-1 5c-2-1-4-1-6 0z" fill="#3a7fd0" /><path d="M8 9c2 1 4 1 6 0l-1 5c-2 1-4 1-6 0z" fill="#f7c232" />
        </svg>
        Пуск
      </button>
      <div className="ml-[9px] flex flex-1 gap-[2px]">
        <Task label="Проводник" stack>
          <rect width="32" height="32" fill="#0e2560" /><path d="M1 6h9l2 3h18v21H1z" fill="#f6e08a" /><path d="M3 4h7l2 3h16v4H3z" fill="#fff4c0" stroke="#c9a94a" strokeWidth=".6" /><path d="M1 12h30v17H1z" fill="#f3dc8c" /><path d="M6 30V20h20v10h-4v-6H10v6z" fill="#8fd0ee" stroke="#3c82a8" strokeWidth=".8" /><path d="M4 4h3v2H4z" fill="#3a9a3a" /><path d="M14 6h3v2h-3z" fill="#c33" />
        </Task>
        <Task label="Медиаплеер">
          <path d="M5 6h19v21H5z" fill="#bfe0f5" stroke="#5a9cc6" /><path d="M24 8h2v19M26 9h2v16" stroke="#3f86b6" fill="none" /><circle cx="14" cy="17" r="8" fill="#ee7a1e" stroke="#c45a08" /><path d="M11 12l8 5-8 5z" fill="#fff" />
        </Task>
        <Task label="Firefox" plain>
          <circle cx="16" cy="16" r="14" fill="#2d68b8" /><path d="M16 4c6-1 12 4 12 11 0 9-6 15-13 15C7 30 2 24 2 17c0-4 1-7 4-10 0 2 1 3 3 3 3-1 5 0 6 2-3 1-4 3-4 5 1 4 6 5 9 2 3-5 1-10-4-15z" fill="#e8701a" /><path d="M24 6c6 5 6 15 0 20 3-6 3-14 0-20z" fill="#ffd23c" /><path d="M6 8c3-5 9-7 14-5-3 1-5 3-5 5 0 2 2 2 3 3l-3 3c-2-3-5-4-8-3z" fill="#4ba3df" />
        </Task>
        <Task label="Chrome">
          <circle cx="16" cy="16" r="14" fill="#fcd20b" /><path d="M16 16L4 9A14 14 0 0128.500 9.500z" fill="#da3b2f" /><path d="M16 9h12.200A14 14 0 003.900 9L10 19z" fill="#da3b2f" /><path d="M3.900 9A14 14 0 0015 30l6-11-11 0z" fill="#4caf50" /><circle cx="16" cy="16" r="6.500" fill="#fff" /><circle cx="16" cy="16" r="5" fill="#3b78d8" />
        </Task>
        <Task label="Opera">
          <circle cx="16" cy="16" r="14" fill="#d8202b" /><ellipse cx="16" cy="16" rx="9" ry="13" fill="#e95059" /><ellipse cx="16" cy="16" rx="4.500" ry="11" fill="#f2ece8" />
        </Task>
        <Task label="JPG">
          <rect x="0" y="0" width="32" height="32" rx="4" fill="#0fc7bd" /><path d="M10 7h9l4 4v14H10z" fill="#fff" /><path d="M6 14h16v7H6z" fill="#0fc7bd" /><text x="7" y="20" fontSize="7" fontWeight="bold" fontFamily="Liberation Mono" fill="#fff">JPG</text>
        </Task>
        <Task label="AutoCAD">
          <rect width="32" height="32" fill="#d84a4e" /><path d="M0 32L32 0v32z" fill="#f1b5b5" /><path d="M16 3l10 20-4 1-4-4h-6l-6 3z" fill="#a5170e" /><path d="M16 3l3 12-7 5-6 3z" fill="#d5361f" /><path d="M12 18h8l2 6-4-3h-5z" fill="#5a0a06" />
        </Task>
        <Task label="Acrobat">
          <rect x="2" y="3" width="28" height="26" fill="#b90d0d" /><path d="M2 3h28v11L2 22z" fill="#d42020" /><path d="M15 6c2 0 1 6-1 10-2 5-5 8-7 8-2-1 2-4 8-6 5-1 11-1 10 1-1 2-6-1-9-5-2-4-2-8-1-8z" fill="none" stroke="#fff" strokeWidth="1.500" />
        </Task>
        <Task label="Inventor" active>
          <rect width="32" height="32" fill="#f0a55c" /><path d="M0 0h32L10 32H0z" fill="#f7c48c" /><path d="M9 4h15v5h-4v9h4v5H9v-5h4V9H9z" fill="#b0481a" /><path d="M13 9h7v9h-7z" fill="#8a3208" /><text x="9" y="30" fontSize="7" fontWeight="bold" fontFamily="Liberation Sans" fill="#fff">PRO</text>
        </Task>
        <Task label="Word" stack>
          <path d="M15 5h14v22H15z" fill="#fff" stroke="#2a5699" strokeWidth="1.500" /><path d="M17 9h10M17 12h10M17 15h10M17 18h10M17 21h10M17 24h10" stroke="#2a5699" /><path d="M1 5l17-3v28L1 27z" fill="#2a5699" /><text x="3.500" y="20.500" fontSize="12" fontWeight="bold" fontFamily="Liberation Sans" fill="#fff">W</text>
        </Task>
        <Task label="Camtasia">
          <path d="M3 5l24-2 3 20-21 6z" fill="#a9bd5c" stroke="#8a9c44" /><path d="M5 10c6 10 14 12 24 11M6 17c6 6 12 8 22 7M9 6c5 8 12 10 19 10" stroke="#e6efc0" strokeWidth="1.500" fill="none" />
        </Task>
        <Task label="Compass">
          <path d="M27 5l-1 6c-8-3-13 0-13 6s6 8 13 5l1 5C13 33 3 27 3 17S14 1 27 5z" fill="#1d4f6e" /><path d="M30 3l-1 7c-8-3-13 0-13 6s6 7 13 4l1 6C16 32 7 25 7 15S17-1 30 3z" fill="#2ba6e4" />
        </Task>
        <Task label="Paint">
          <path d="M4 12C8 6 20 4 27 10c6 7 2 17-6 18-6 1-4-5-8-4-3 2-9 3-11-1-2-3 0-8 2-11z" fill="#cfe6f5" stroke="#7ba7c4" /><circle cx="9" cy="13" r="2.500" fill="#e8a43a" /><circle cx="16" cy="10" r="2.500" fill="#5bb85b" /><circle cx="7" cy="19" r="2.500" fill="#c0392b" /><circle cx="15" cy="20" r="2.500" fill="#4b90d0" /><path d="M28 1l3 4-5 6-8 20-2-1 7-20z" fill="#d98a4a" stroke="#9a5a24" strokeWidth=".6" />
        </Task>
        <Task label="Excel">
          <path d="M15 5h14v22H15z" fill="#fff" stroke="#1e7145" strokeWidth="1.500" /><path d="M17 9h10M17 12h10M17 15h10M17 18h10M17 21h10M17 24h10M22 6v20" stroke="#1e7145" /><path d="M1 5l17-3v28L1 27z" fill="#1e7145" /><text x="5" y="20.500" fontSize="12" fontWeight="bold" fontFamily="Liberation Sans" fill="#fff">X</text>
        </Task>
      </div>
      <span className="text-[12px]">RU</span>
      <span className="ml-1 h-6 w-px bg-[#808080]" />
      <div className={`ml-[3px] flex h-[38px] w-[158px] items-center pl-[5px] pr-px ${sunken}`}>
        <button aria-label="Скрытые значки"><Svg s={8} vb="0 0 8 10"><path d="M1 4l3-3 3 3M1 8l3-3 3 3" stroke="#000" strokeWidth="1.500" /></Svg></button>
        <span className="ml-[9px]"><Svg><path d="M8 1a7 7 0 010 14z" fill="#f0b040" /><circle cx="7" cy="8" r="6" fill="#fff" stroke="#1fa0c0" strokeWidth="2" /><path d="M7 5v6a3 3 0 010-6z" fill="#1b6f9c" stroke="#1b6f9c" /><path d="M9 2a6 6 0 010 12z" fill="#f0b040" /></Svg></span>
        <span className="ml-[10px]"><Svg><path d="M3 6h2l5-4v12l-5-4H3z" fill="#f4f4f4" stroke="#777" /></Svg></span>
        <time className="flex-1 text-center text-[11px] leading-4" dateTime="2015-06-19T17:03"><span className="block">17:03</span><span className="block">19.06.2015</span></time>
        <Svg><path d="M0 2h16v11H0z" fill="#2f62b8" stroke="#aac" /><path d="M0 13L16 2v2L3 13z" fill="#7fb0ee" /></Svg>
      </div>
    </footer>
  );
}

export default function App() {
  return (
    <div className="relative flex min-h-screen flex-col overflow-hidden bg-[#d4d0c8] font-['DejaVu_Sans_Condensed','Noto_Sans',sans-serif] text-[11px] leading-[14px]">
      <Header />
      <Ribbon />
      <div className="flex flex-1 pr-[2px]">
        <Browser />
        <Workspace />
      </div>
      <div className="flex h-[26px] items-center justify-end gap-[3px] border-t border-[#888] pr-px text-black">
        <span className={`h-[22px] w-9 pl-[5px] leading-5 ${sunken}`}>1</span>
        <span className={`h-[22px] w-9 pl-[5px] leading-5 ${sunken}`}>2</span>
      </div>
      <TaskBar />
      <Dialog />
    </div>
  );
}
